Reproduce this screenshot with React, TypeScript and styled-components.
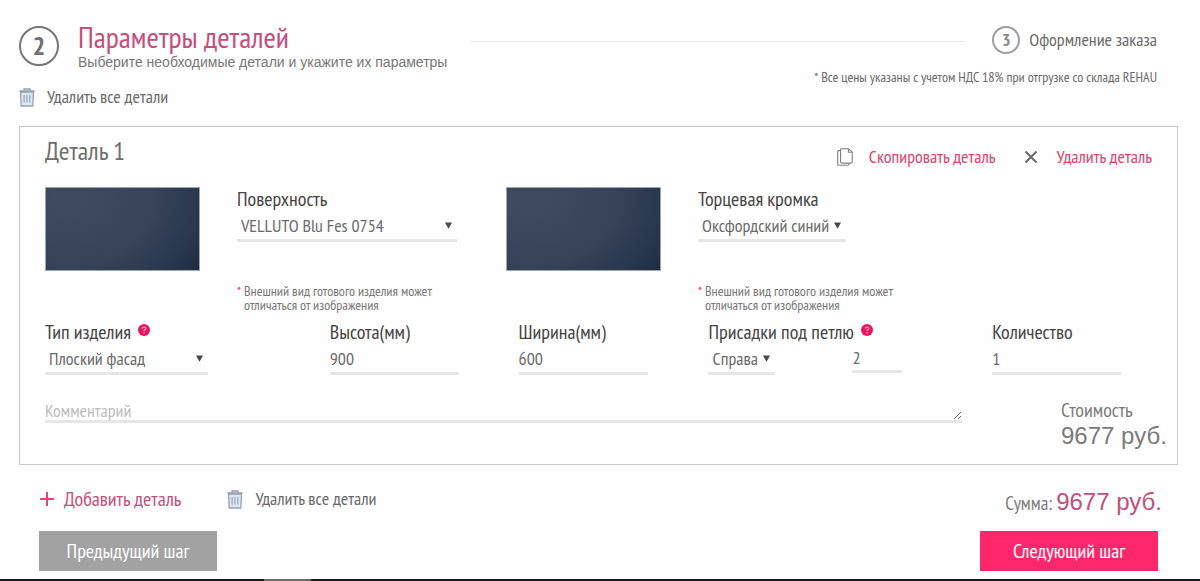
import React, { useId, useState } from "react";
import styled, { createGlobalStyle } from "styled-components";

const narrow = `"PT Sans Narrow", "Liberation Sans Narrow", "Noto Sans", sans-serif`;
const wide = `"Liberation Sans", Arial, sans-serif`;

const color = {
  pink: "#c2507c",
  link: "#db4471",
  accent: "#ff276b",
  heading: "#6f6f6f",
  text: "#6a6a6a",
  dark: "#444444",
  line: "#e6e6e6",
};

const GlobalStyle = createGlobalStyle`
  *, *::before, *::after { box-sizing: border-box; }
  body { margin: 0; background: #fefefe; font-family: ${narrow}; color: ${color.text}; }
  button, input, select, textarea { font: inherit; color: inherit; }
`;

const Page = styled.div`
  display: flex;
  flex-direction: column;
  min-height: 100vh;
`;

const Main = styled.main`
  display: flex;
  flex-direction: column;
  padding: 23px 22px 8px 19px;
`;

const Header = styled.header`
  display: flex;
  align-items: flex-start;
  height: 63px;
  padding-right: 21px;
`;

const StepBadge = styled.span<{ $current?: boolean }>`
  display: flex;
  align-items: center;
  justify-content: center;
  flex: none;
  width: ${(p) => (p.$current ? 40 : 28)}px;
  height: ${(p) => (p.$current ? 40 : 28)}px;
  margin-top: ${(p) => (p.$current ? 3 : 0)}px;
  border: 2px solid ${(p) => (p.$current ? "#777777" : "#9b9ea3")};
  border-radius: 50%;
  font-size: ${(p) => (p.$current ? 26 : 18)}px;
  font-weight: 700;
  line-height: 1;
  color: ${(p) => (p.$current ? color.heading : "#8a8a8a")};
`;

const Titles = styled.div`
  margin-left: 19px;
`;

const Title = styled.h1`
  margin: 0;
  font-size: 30px;
  font-weight: 400;
  line-height: 28px;
  color: ${color.pink};
`;

const Subtitle = styled.p`
  margin: 3px 0 0;
  font-family: ${wide};
  font-size: 14px;
  line-height: 16px;
  color: #777777;
`;

const Rule = styled.hr`
  flex: 1;
  height: 1px;
  margin: 18px 28px 0 23px;
  border: 0;
  background: #ebebeb;
`;

const NextStep = styled.div`
  display: flex;
  align-items: center;
  gap: 9px;
  margin-top: 3px;
  font-size: 18px;
  line-height: 28px;
`;

const HeaderSide = styled.div`
  display: flex;
  flex-direction: column;
  align-items: flex-end;
  gap: 14px;
  width: 340px;
  margin-left: -176px;
`;

const Note = styled.p`
  margin: 0;
  font-size: 14px;
  line-height: 18px;
  white-space: nowrap;
`;

const PlainButton = styled.button<{ $tone?: "link" | "pink"; $gap?: number; $large?: boolean }>`
  display: flex;
  align-items: center;
  align-self: flex-start;
  gap: ${(p) => p.$gap ?? 12}px;
  padding: 0;
  border: 0;
  background: none;
  font-size: ${(p) => (p.$large ? 20 : 18)}px;
  line-height: 22px;
  cursor: pointer;
  white-space: nowrap;
  color: ${(p) => (p.$tone ? color[p.$tone] : color.text)};
`;

const Card = styled.section`
  margin-top: 18px;
  padding: 0 10px 14px 25px;
  border: 1px solid #c9c9c9;
`;

const CardHead = styled.div`
  display: flex;
  align-items: flex-start;
  justify-content: space-between;
  height: 60px;
  padding: 8px 15px 0 0;
`;

const CardTitle = styled.h2`
  margin: 0;
  font-size: 26px;
  font-weight: 400;
  line-height: 32px;
  color: ${color.heading};
`;

const CardActions = styled.div`
  display: flex;
  gap: 28px;
  padding-top: 11px;
`;

const Finishes = styled.div`
  display: grid;
  grid-template-columns: 461fr 661fr;
  min-height: 133px;
`;

const Finish = styled.div`
  display: flex;
  gap: 37px;
`;

const Swatch = styled.div`
  width: 155px;
  height: 84px;
  border: 1px solid #9da5b1;
  background: radial-gradient(ellipse 100% 140% at 15% 15%, #404b5f 0%, #364358 55%, #2a384f 85%, #1b2840 110%);
`;

const FinishBody = styled.div`
  display: flex;
  flex-direction: column;
  align-items: flex-start;
`;

const Warning = styled.p`
  width: 220px;
  margin: 42px 0 0;
  padding-left: 7px;
  font-size: 14px;
  line-height: 14px;
  text-indent: -7px;
  color: #777777;

  &::before {
    content: "*";
    display: inline-block;
    width: 7px;
    text-indent: 0;
    color: ${color.accent};
  }
`;

const LabelRow = styled.div`
  display: flex;
  align-items: center;
  gap: 7px;
  height: 25px;
  font-size: 20px;
  line-height: 25px;
  white-space: nowrap;
  color: ${color.dark};
`;

const HelpButton = styled.button`
  width: 12px;
  height: 12px;
  margin-bottom: 6px;
  padding: 0;
  border: 0;
  background: none;
  line-height: 0;
`;

const SelectBox = styled.div<{ $width: number }>`
  position: relative;
  width: ${(p) => p.$width}px;

  svg {
    position: absolute;
    top: 10px;
    right: 5px;
    pointer-events: none;
  }
`;

const Select = styled.select`
  display: block;
  width: 100%;
  height: 30px;
  padding: 0 16px 0 4px;
  border: 0;
  border-bottom: 3px solid ${color.line};
  border-radius: 0;
  appearance: none;
  background: none;
  font-size: 18px;
`;

const Input = styled.input<{ $width: number; $height?: number }>`
  display: block;
  width: ${(p) => p.$width}px;
  height: ${(p) => p.$height ?? 30}px;
  padding: 0;
  border: 0;
  border-bottom: 3px solid ${color.line};
  background: none;
  font-size: 18px;
`;

const Fields = styled.div`
  display: grid;
  grid-template-columns: 285fr 189fr 190fr 284fr 175fr;
`;

const Pair = styled.div`
  display: flex;
  align-items: flex-start;
  gap: 77px;
`;

const CardFoot = styled.div`
  display: flex;
  justify-content: space-between;
  margin-top: 23px;
`;

const Comment = styled.textarea`
  flex: 1;
  height: 24px;
  margin: 1px 99px 0 0;
  padding: 0;
  border: 0;
  border-bottom: 3px solid ${color.line};
  background: none;
  font-size: 18px;
  line-height: 24px;
  overflow: hidden;

  &::placeholder {
    color: #bdbdbd;
  }
`;

const Cost = styled.div`
  flex: none;
  width: 106px;
  font-size: 20px;
  line-height: 24px;
  color: #7b7b7b;
`;

const Price = styled.div`
  font-family: ${wide};
  font-size: 24px;
  line-height: 28px;
  white-space: nowrap;
`;

const Summary = styled.div`
  display: flex;
  align-items: center;
  gap: 46px;
  height: 32px;
  margin: 18px 16px 0 21px;

  ${PlainButton} {
    align-self: center;
  }
`;

const Total = styled.p`
  display: flex;
  align-items: baseline;
  gap: 4px;
  margin: 5px 0 0 auto;
  font-size: 19px;
  color: #7b7b7b;

  strong {
    font-family: ${wide};
    font-size: 24px;
    font-weight: 400;
    color: ${color.pink};
  }
`;

const Navigation = styled.nav`
  display: flex;
  justify-content: space-between;
  margin: 16px 20px 0;
`;

const NavButton = styled.button<{ $primary?: boolean }>`
  width: 178px;
  height: 40px;
  padding: 0;
  border: 0;
  background: ${(p) => (p.$primary ? color.accent : "#a2a2a2")};
  font-size: 20px;
  color: #ffffff;
`;

const BottomBar = styled.footer`
  display: flex;
  height: 2px;
  margin-top: auto;
  padding-left: 22%;
  background: #1b1b1f;

  &::before {
    content: "";
    width: 5%;
    background: #6a6a6a;
  }
`;

const TrashIcon = () => (
  <svg width="16" height="19" viewBox="0 0 16 19" fill="none" aria-hidden="true">
    <path d="M1.5 4h13l-.7 14H2.2z" fill="#dde6f1" stroke="#97a3b4" strokeWidth="1.3" />
    <path d="M.5 3h15" stroke="#97a0ac" strokeWidth="1.6" />
    <path d="M5 2.4V1h6v1.4" stroke="#97a0ac" strokeWidth="1.3" />
    <path d="M5.2 7v7.6M8 7v7.6M10.8 7v7.6" stroke="#a3b2c8" strokeWidth="1.5" />
  </svg>
);

const CopyIcon = () => (
  <svg width="16" height="18" viewBox="0 0 16 18" fill="none" stroke="#808080" strokeWidth="1.1" aria-hidden="true">
    <path d="M3.5 2.6H1.6Q.7 2.6.7 3.6V16.2Q.7 17.3 1.8 17.3H10.8Q12 17.3 12 16.2V15.2" />
    <path d="M4.8.7H11.6L15.2 4V13.9Q15.2 15.1 14 15.1H4.8Q3.6 15.1 3.6 13.9V1.9Q3.6.7 4.8.7Z" />
    <path d="M11.4.9V4.2H15" />
  </svg>
);

const CrossIcon = () => (
  <svg width="14" height="14" viewBox="0 0 14 14" stroke="#6c6c6c" strokeWidth="2.1" aria-hidden="true">
    <path d="M1.5 1.5l11 11M12.5 1.5l-11 11" />
  </svg>
);

const PlusIcon = () => (
  <svg width="14" height="14" viewBox="0 0 14 14" stroke="#e0457a" strokeWidth="2" aria-hidden="true">
    <path d="M7 0v14M0 7h14" />
  </svg>
);

const ArrowIcon = () => (
  <svg width="7" height="7" viewBox="0 0 7 7" fill="#4a4a4a" aria-hidden="true">
    <path d="M0 .4h7L3.5 6.8z" />
  </svg>
);

const Help = ({ label }: { label: string }) => (
  <HelpButton type="button" aria-label={label}>
    <svg width="12" height="12" viewBox="0 0 12 12" aria-hidden="true">
      <circle cx="6" cy="6" r="6" fill="#ea1460" />
      <path d="M4.2 4.6Q4.3 3 6 3T7.8 4.5Q7.8 5.3 6.8 5.8Q6 6.2 6 7" fill="none" stroke="#ffb3cb" strokeWidth="1.2" />
      <circle cx="6" cy="8.8" r=".8" fill="#ffb3cb" />
    </svg>
  </HelpButton>
);

type SelectFieldProps = { label: string; value: string; width: number; help?: string; children?: React.ReactNode };

const SelectField = ({ label, value, width, help, children }: SelectFieldProps) => {
  const id = useId();
  return (
    <div>
      <LabelRow>
        <label htmlFor={id}>{label}</label>
        {help && <Help label={help} />}
      </LabelRow>
      <Pair>
        <SelectBox $width={width}>
          <Select id={id} defaultValue={value}>
            <option>{value}</option>
          </Select>
          <ArrowIcon />
        </SelectBox>
        {children}
      </Pair>
    </div>
  );
};

const InputField = ({ label, initial }: { label: string; initial: string }) => {
  const id = useId();
  const [value, setValue] = useState(initial);
  return (
    <div>
      <LabelRow>
        <label htmlFor={id}>{label}</label>
      </LabelRow>
      <Input id={id} $width={129} value={value} onChange={(e) => setValue(e.target.value)} />
    </div>
  );
};

const finishes = [
  { label: "Поверхность", value: "VELLUTO Blu Fes 0754", width: 220 },
  { label: "Торцевая кромка", value: "Оксфордский синий", width: 148 },
];

export default function App() {
  return (
    <Page>
      <GlobalStyle />
      <Main>
        <Header>
          <StepBadge $current>2</StepBadge>
          <Titles>
            <Title>Параметры деталей</Title>
            <Subtitle>Выберите необходимые детали и укажите их параметры</Subtitle>
          </Titles>
          <Rule />
          <HeaderSide>
            <NextStep>
              <StepBadge>3</StepBadge>
              <span>Оформление заказа</span>
            </NextStep>
            <Note>* Все цены указаны с учетом НДС 18% при отгрузке со склада REHAU</Note>
          </HeaderSide>
        </Header>

        <PlainButton type="button">
          <TrashIcon />
          Удалить все детали
        </PlainButton>

        <Card>
          <CardHead>
            <CardTitle>Деталь 1</CardTitle>
            <CardActions>
              <PlainButton type="button" $tone="link" $gap={16}>
                <CopyIcon />
                Скопировать деталь
              </PlainButton>
              <PlainButton type="button" $tone="link" $gap={19}>
                <CrossIcon />
                Удалить деталь
              </PlainButton>
            </CardActions>
          </CardHead>

          <Finishes>
            {finishes.map((finish) => (
              <Finish key={finish.label}>
                <Swatch />
                <FinishBody>
                  <SelectField {...finish} />
                  <Warning>Внешний вид готового изделия может отличаться от изображения</Warning>
                </FinishBody>
              </Finish>
            ))}
          </Finishes>

          <Fields>
            <SelectField label="Тип изделия" value="Плоский фасад" width={163} help="Справка: тип изделия" />
            <InputField label="Высота(мм)" initial="900" />
            <InputField label="Ширина(мм)" initial="600" />
            <SelectField label="Присадки под петлю" value="Справа" width={67} help="Справка: присадки под петлю">
              <Input $width={50} $height={28} defaultValue="2" aria-label="Количество присадок" />
            </SelectField>
            <InputField label="Количество" initial="1" />
          </Fields>

          <CardFoot>
            <Comment placeholder="Комментарий" aria-label="Комментарий" />
            <Cost>
              Стоимость
              <Price>9677 руб.</Price>
            </Cost>
          </CardFoot>
        </Card>

        <Summary>
          <PlainButton type="button" $tone="pink" $gap={10} $large>
            <PlusIcon />
            Добавить деталь
          </PlainButton>
          <PlainButton type="button">
            <TrashIcon />
            Удалить все детали
          </PlainButton>
          <Total>
            Сумма: <strong>9677 руб.</strong>
          </Total>
        </Summary>

        <Navigation>
          <NavButton type="button">Предыдущий шаг</NavButton>
          <NavButton type="button" $primary>
            Следующий шаг
          </NavButton>
        </Navigation>
      </Main>
      <BottomBar />
    </Page>
  );
}
